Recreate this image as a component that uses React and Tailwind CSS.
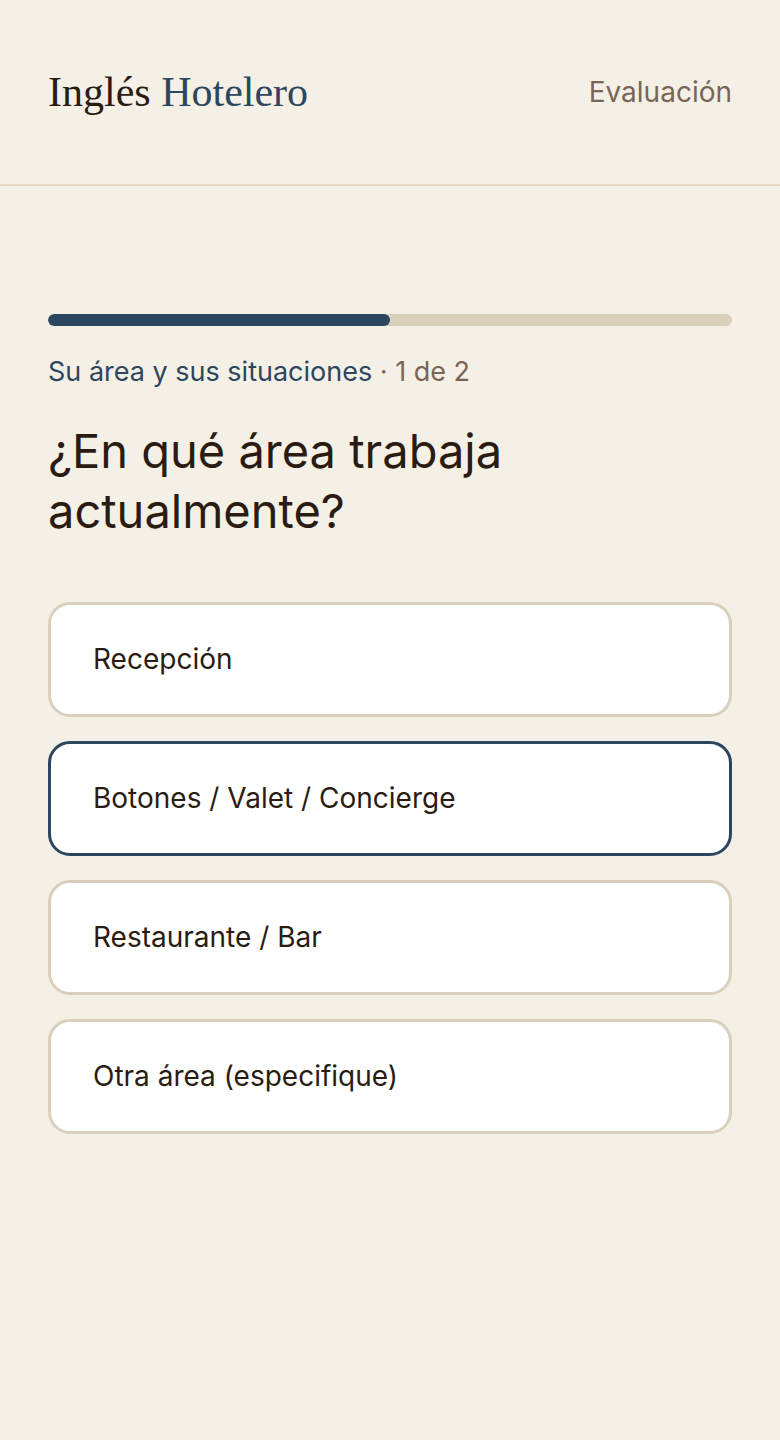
import { useState } from "react";

const options = [
  "Recepción",
  "Botones / Valet / Concierge",
  "Restaurante / Bar",
  "Otra área (especifique)",
];

const App = () => {
  const [selected, setSelected] = useState(1);

  return (
    <div className="min-h-screen bg-[#f5f0e6] font-['Inter',sans-serif] text-[#2a1c12]">
      <header className="h-[186px] px-12 flex items-center justify-between border-b-2 border-[#e6d9c5]">
        <h1 className="font-['Liberation_Serif',serif] text-[42px]">
          <span className="text-[#2a1c12]">Inglés</span>{" "}
          <span className="text-[#2d4660]">Hotelero</span>
        </h1>
        <span className="text-[28px] text-[#7a6555]">Evaluación</span>
      </header>

      <main className="px-12 pt-[128px]">
        <div className="h-3 w-full rounded-full bg-[#d9cfbb] overflow-hidden">
          <div className="h-full w-1/2 rounded-full bg-[#2d4660]" />
        </div>

        <p className="mt-[26px] text-[27px]">
          <span className="text-[#2d4660]">Su área y sus situaciones</span>
          <span className="text-[#7a6555]"> · 1 de 2</span>
        </p>

        <h2 className="mt-[28px] text-[47px] leading-[60px] text-[#2a1c12]">
          ¿En qué área trabaja
          <br />
          actualmente?
        </h2>

        <div className="mt-[61px] flex flex-col gap-6">
          {options.map((opt, i) => (
            <button
              key={opt}
              onClick={() => setSelected(i)}
              className={`h-[115px] w-full rounded-[22px] border-[3px] bg-white px-[42px] text-left text-[28px] ${
                selected === i ? "border-[#2d4660]" : "border-[#d9cfbb]"
              }`}
            >
              {opt}
            </button>
          ))}
        </div>
      </main>
    </div>
  );
};

export default App;
